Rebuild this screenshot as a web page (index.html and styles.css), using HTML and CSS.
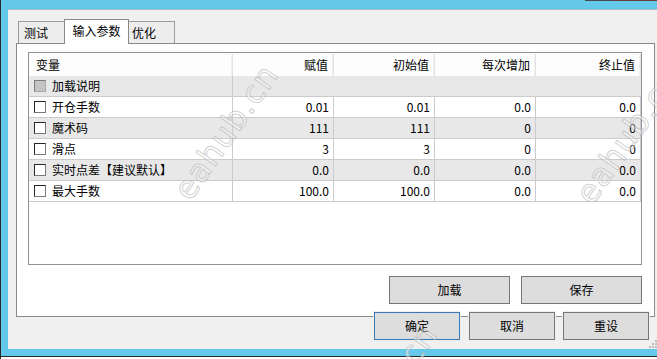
FILE: index.html
```html
<!DOCTYPE html>
<html lang="zh-CN">
<head>
<meta charset="utf-8">
<title>输入参数</title>
<link rel="stylesheet" href="styles.css">
</head>
<body>
<div class="window">
  <div class="titlebar"><span class="ctl-min"></span><span class="ctl-close"></span></div>
  <div class="middle">
    <div class="frame-left"></div>
    <div class="content">
      <div class="tabs">
        <div class="tab t1">测试</div>
        <div class="tab active">输入参数</div>
        <div class="tab t3">优化</div>
      </div>
      <div class="panel">
        <div class="list">
          <div class="row head">
            <div class="hc name">变量</div>
            <div class="hc num">赋值</div>
            <div class="hc num">初始值</div>
            <div class="hc num">每次增加</div>
            <div class="hc num">终止值</div>
          </div>
          <div class="row alt merged">
            <div class="c name"><span class="cb cb-dis"></span>加载说明</div>
            <div class="c span"></div>
          </div>
          <div class="row">
            <div class="c name"><span class="cb"></span>开仓手数</div>
            <div class="c num">0.01</div><div class="c num">0.01</div><div class="c num">0.0</div><div class="c num">0.0</div>
          </div>
          <div class="row alt">
            <div class="c name"><span class="cb"></span>魔术码</div>
            <div class="c num">111</div><div class="c num">111</div><div class="c num">0</div><div class="c num">0</div>
          </div>
          <div class="row">
            <div class="c name"><span class="cb"></span>滑点</div>
            <div class="c num">3</div><div class="c num">3</div><div class="c num">0</div><div class="c num">0</div>
          </div>
          <div class="row alt">
            <div class="c name"><span class="cb"></span>实时点差【建议默认】</div>
            <div class="c num">0.0</div><div class="c num">0.0</div><div class="c num">0.0</div><div class="c num">0.0</div>
          </div>
          <div class="row">
            <div class="c name"><span class="cb"></span>最大手数</div>
            <div class="c num">100.0</div><div class="c num">100.0</div><div class="c num">0.0</div><div class="c num">0.0</div>
          </div>
        </div>
        <div class="panel-buttons">
          <button class="btn wide">加载</button>
          <button class="btn wide">保存</button>
        </div>
      </div>
      <div class="dialog-buttons">
        <button class="btn default">确定</button>
        <button class="btn">取消</button>
        <button class="btn">重设</button>
      </div>
      <svg class="grip" width="9" height="9" viewBox="0 0 9 9">
        <g fill="#bdbdbd">
          <rect x="7" y="1" width="2" height="2"/>
          <rect x="7" y="4" width="2" height="2"/><rect x="4" y="4" width="2" height="2"/>
          <rect x="7" y="7" width="2" height="2"/><rect x="4" y="7" width="2" height="2"/><rect x="1" y="7" width="2" height="2"/>
        </g>
      </svg>
    </div>
  </div>
  <div class="frame-bottom"></div>
</div>
<div class="wm wm1">eahub.cn</div>
<div class="wm wm3">eahub.cn</div>
<div class="wm wm5">eahub.cn</div>
</body>
</html>
```
FILE: styles.css
```css
* { box-sizing: border-box; margin: 0; padding: 0; }
html, body { width: 657px; height: 359px; overflow: hidden; background: #fff; }
body {
  font-family: "Noto Sans CJK SC", "Noto Sans", sans-serif;
  font-size: 12px;
  color: #000;
  position: relative;
}
.window {
  width: 657px;
  height: 359px;
  display: flex;
  flex-direction: column;
  border-left: 1px solid #2a2a2a;
}
.titlebar {
  height: 9px;
  flex: none;
  background: #63c8e9;
  display: flex;
  justify-content: flex-end;
  align-items: flex-start;
}
.ctl-min { width: 28px; height: 1px; background: #4a4a4a; }
.ctl-close { width: 44px; height: 1px; background: #6e3a38; }
.middle { display: flex; height: 340px; flex: none; }
.frame-left { width: 7px; background: #63c8e9; flex: none; }
.content {
  flex: 1;
  background: #f0f0f0;
  border-top: 1px solid #a9bcc4;
  padding-top: 9px;
  position: relative;
}
.frame-bottom {
  height: 8px;
  flex: none;
  background: #63c8e9;
  border-bottom: 1px solid #2a2a2a;
}

/* tabs */
.tabs { display: flex; align-items: flex-end; height: 24px; padding-left: 10px; }
.tab {
  height: 22px;
  border: 1px solid #9c9c9c;
  border-bottom: none;
  background: #ededed;
  line-height: 20px;
  padding-top: 1px;
  white-space: nowrap;
}
.t1 { width: 46px; border-right: none; padding-left: 5px; }
.t3 { width: 46px; border-left: none; padding-left: 3px; }
.tab.active {
  height: 25px;
  width: 65px;
  background: #fff;
  border-color: #898989;
  margin-bottom: -1px;
  position: relative;
  z-index: 1;
  text-align: center;
  line-height: 22px;
  padding-top: 0;
}

/* panel */
.panel {
  margin-left: 8px;
  width: 639px;
  border: 1px solid #898989;
  background: #fff;
  padding: 8px 12px 12px 11px;
}
.list {
  height: 213px;
  border: 1px solid #8e9299;
  background: #fff;
}
.row {
  display: grid;
  grid-template-columns: 204px 101px 101px 101px 105px;
  height: 21px;
  border-bottom: 1px solid #cbcbcb;
}
.row.merged { grid-template-columns: 204px 408px; }
.row.alt { background: #e8e8e8; }
.row.head {
  height: 23px;
  border-bottom: none;
  background: #fff;
  padding-top: 1px;
}
.hc {
  line-height: 21px;
  border-right: 1px solid #e2e2e2;
  box-shadow: inset -1px 0 0 #f2f2f2;
  background: #fdfdfd;
}
.hc.name { padding-left: 7px; }
.hc.num { text-align: right; padding-right: 5px; }
.c {
  line-height: 20px;
  border-right: 1px solid #cbcbcb;
  white-space: nowrap;
}
.c.span { border-right: none; }
.c.name { display: flex; align-items: center; padding-left: 5px; }
.c.num { text-align: right; padding-right: 4px; }
.cb {
  width: 12px;
  height: 12px;
  margin-right: 6px;
  background: #fff;
  border: 1px solid;
  border-color: #262626 #7a7a7a #7a7a7a #262626;
  flex: none;
}
.cb-dis { background: #c4c4c4; border-color: #7d7d7d #a8a8a8 #a8a8a8 #7d7d7d; }

/* buttons */
.btn {
  height: 28px;
  background: #dddddd;
  border: 1px solid #777;
  font: inherit;
  color: #000;
  line-height: 26px;
}
.panel-buttons { display: flex; justify-content: flex-end; gap: 11px; margin-top: 11px; }
.wide { width: 121px; }
.dialog-buttons {
  display: flex;
  justify-content: flex-end;
  gap: 8px;
  margin-top: -5px;
  padding-right: 8px;
  position: relative;
}
.dialog-buttons .btn { width: 86px; box-shadow: 0 0 0 1px #f0f0f0; }
.btn.default { border-color: #3a79b1; margin-right: 1px; }
.grip { position: absolute; right: 0; bottom: 1px; }

/* watermark */
.wm {
  position: absolute;
  font-family: "DejaVu Sans", sans-serif;
  font-size: 32px;
  color: rgba(255, 255, 255, 0.45);
  -webkit-text-stroke: 1px rgba(170, 170, 170, 0.55);
  transform: translate(-50%, -50%) rotate(-55deg);
  white-space: nowrap;
  pointer-events: none;
  letter-spacing: 1px;
}
.wm1 { left: 226px; top: 132px; }
.wm3 { left: 628px; top: 136px; }
.wm5 { left: 385px; top: 392px; }
```
